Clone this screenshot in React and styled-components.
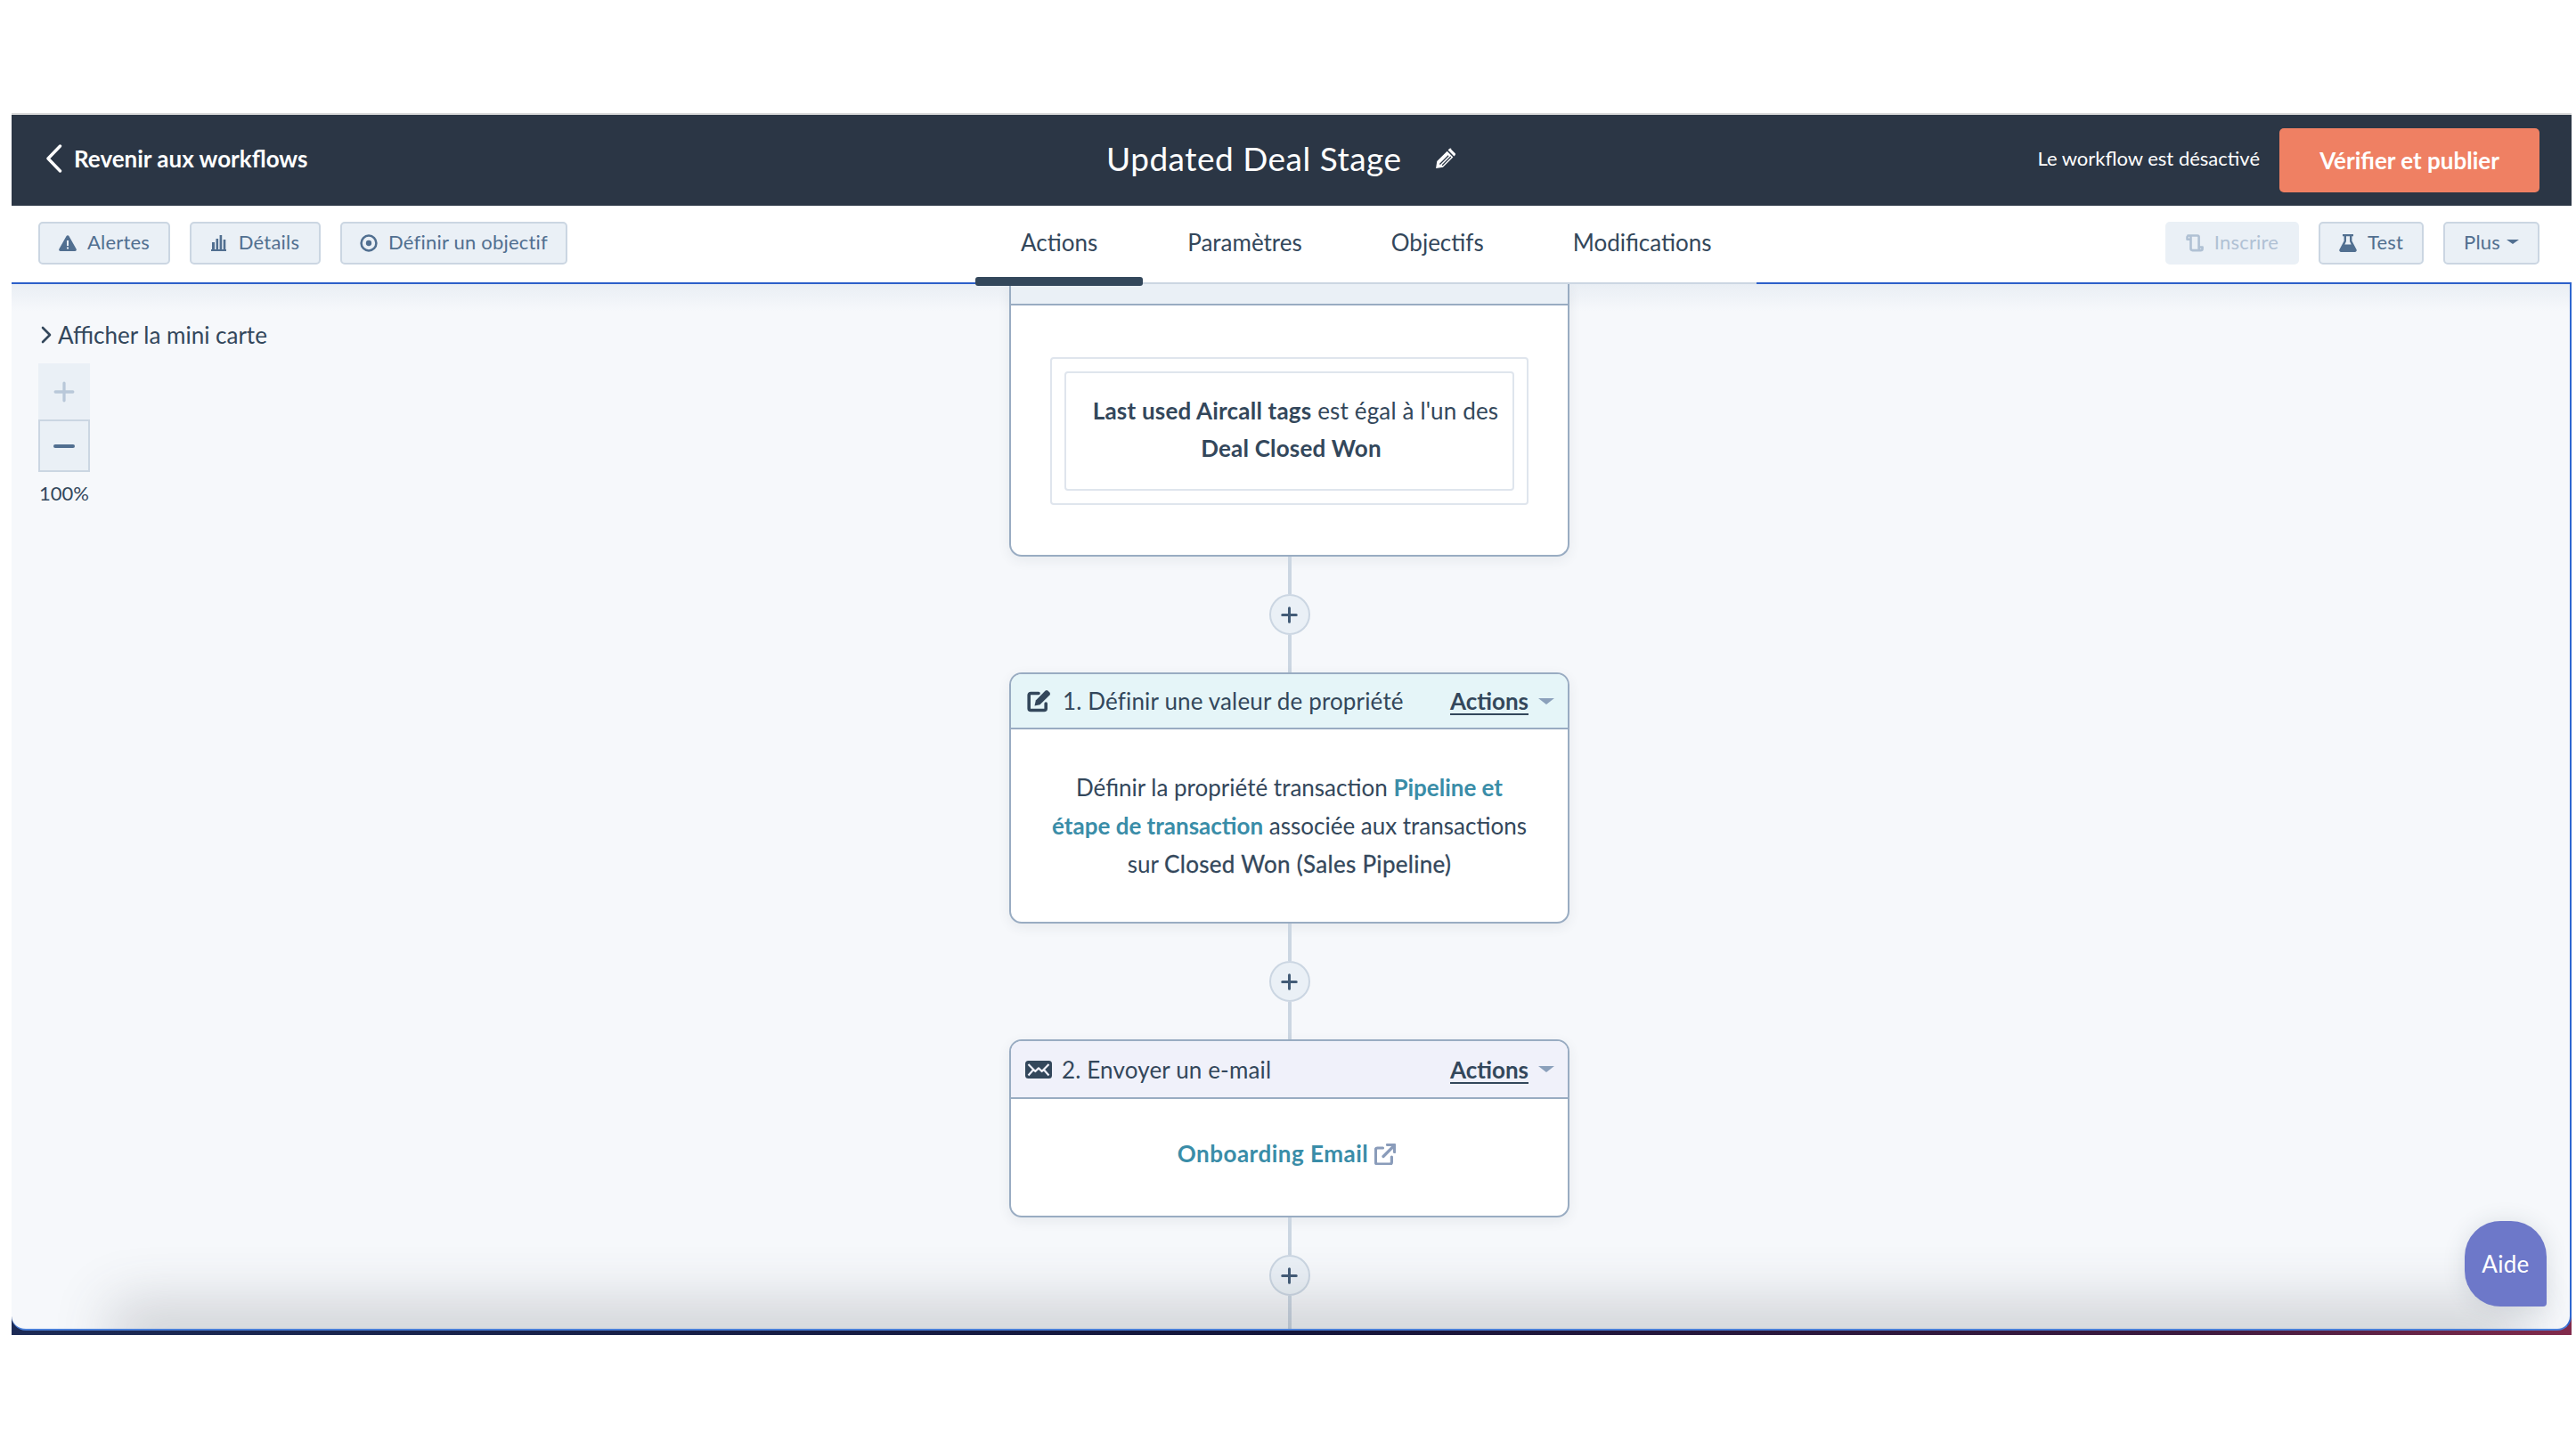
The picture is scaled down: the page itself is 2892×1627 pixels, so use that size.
import React from "react";
import styled, { createGlobalStyle } from "styled-components";

const Global = createGlobalStyle`
  html, body { margin: 0; padding: 0; background: #fff; }
  body { font-family: Lato, "Open Sans", "Liberation Sans", sans-serif; color: #33475b; }
  * { box-sizing: border-box; }
`;

const Page = styled.div`
  width: 2892px;
  height: 1627px;
  padding: 127px 5px 0 13px;
  overflow: hidden;
`;
const Window = styled.div`
  display: flex;
  flex-direction: column;
  width: 2874px;
`;
const TopBar = styled.header`
  display: grid;
  grid-template-columns: 1229px auto 1fr;
  align-items: center;
  height: 104px;
  padding-bottom: 4px;
  border-top: 2px solid #d9d9d9;
  background: #2b3645;
  color: #fff;
`;
const BackLink = styled.a`
  display: flex;
  align-items: center;
  gap: 13px;
  padding-left: 38px;
  font-size: 26px;
  font-weight: 700;
`;
const TitleGroup = styled.div`
  display: flex;
  align-items: center;
  gap: 37px;
`;
const Title = styled.h1`
  margin: 0;
  font-size: 37px;
  font-weight: 400;
  line-height: 44px;
  letter-spacing: 0.5px;
`;
const PencilSlot = styled.span`
  display: flex;
  margin-top: -3px;
`;
const PublishArea = styled.div`
  display: flex;
  align-items: center;
  justify-content: flex-end;
  gap: 22px;
  padding-right: 36px;
`;
const Status = styled.span`
  margin-top: -2px;
  font-size: 22px;
`;
const Publish = styled.button`
  width: 292px;
  height: 72px;
  margin-top: 4px;
  padding-bottom: 2px;
  border: 0;
  border-radius: 5px;
  background: #ef8063;
  color: #fff;
  font: 700 26px Lato, sans-serif;
`;
const Toolbar = styled.nav`
  display: flex;
  align-items: center;
  height: 88px;
  padding: 0 36px 2px 30px;
  background: #fff;
  border-bottom: 2px solid #2c5fc9;
`;
const ButtonGroup = styled.div`
  display: flex;
  align-items: center;
  gap: 22px;
  width: ${(p) => (p.$width ? `${p.$width}px` : "auto")};
  margin-left: ${(p) => (p.$push ? "auto" : 0)};
`;
const ToolButton = styled.button`
  display: flex;
  align-items: center;
  justify-content: center;
  gap: ${(p) => p.$gap || 12}px;
  width: ${(p) => p.$width}px;
  height: 48px;
  padding: 0 0 4px;
  border: 2px solid ${(p) => (p.$disabled ? "#eaf0f6" : "#cbd6e2")};
  border-radius: 5px;
  background: #eaf0f6;
  color: ${(p) => (p.$disabled ? "#b0c1d4" : "#516f90")};
  font: 400 22px Lato, sans-serif;
  letter-spacing: 0.2px;
  svg { margin-top: 3px; }
`;
const Tabs = styled.div`
  position: relative;
  z-index: 4;
  display: flex;
  align-self: flex-start;
  height: 88px;
  border-bottom: 2px solid #cbd6e2;
`;
const Tab = styled.a`
  position: relative;
  display: flex;
  align-items: center;
  height: 86px;
  padding: 0 ${(p) => (p.$active ? 51 : 50)}px 4px;
  font-size: 26px;
  color: #33475b;
  font-weight: 400;
  &::after {
    content: "";
    display: ${(p) => (p.$active ? "block" : "none")};
    position: absolute;
    left: 0;
    right: 0;
    bottom: -4px;
    height: 10px;
    border-radius: 3px;
    background: #33475b;
  }
`;
const CanvasFrame = styled.div`
  height: 1180px;
  padding-bottom: 5px;
  background: linear-gradient(90deg, #1c2a55 0%, #14153a 50%, #3c1a3f 85%, #822b4c 100%);
`;
const Canvas = styled.main`
  position: relative;
  display: flex;
  height: 1175px;
  padding-left: 30px;
  overflow: hidden;
  border-right: 2px solid #2f67cf;
  border-bottom: 2px solid #4a7fd8;
  border-bottom-right-radius: 16px;
  border-bottom-left-radius: 16px;
  background: linear-gradient(#e9eef4 0, #f6f8fb 30px);
`;
const Side = styled.aside`
  flex: none;
  width: 1090px;
  padding-top: 42px;
`;
const MiniMapToggle = styled.a`
  display: flex;
  align-items: center;
  gap: 7px;
  height: 30px;
  padding-left: 3px;
  font-size: 26px;
`;
const ZoomStack = styled.div`
  display: flex;
  flex-direction: column;
  width: 58px;
  margin-top: 17px;
`;
const ZoomButton = styled.button`
  display: flex;
  align-items: center;
  justify-content: center;
  width: 58px;
  height: ${(p) => (p.$active ? 59 : 63)}px;
  padding: 0;
  border: ${(p) => (p.$active ? "2px solid #cbd6e2" : "0")};
  background: #eaf0f6;
`;
const ZoomValue = styled.div`
  width: 58px;
  margin-top: 11px;
  text-align: center;
  font-size: 22px;
  line-height: 26px;
`;
const Flow = styled.section`
  flex: none;
  display: flex;
  flex-direction: column;
  width: 629px;
`;
const Card = styled.article`
  flex: none;
  overflow: hidden;
  background: #fff;
  border: 2px solid #99acc2;
  border-top-width: ${(p) => (p.$cut ? 0 : 2)}px;
  border-radius: ${(p) => (p.$cut ? "0 0 14px 14px" : "14px")};
  box-shadow: 0 4px 14px rgba(45, 62, 80, 0.08);
`;
const CardHead = styled.div`
  display: flex;
  align-items: center;
  height: ${(p) => p.$height}px;
  padding: 0 15px 0 ${(p) => p.$left || 18}px;
  border-bottom: 2px solid #99acc2;
  background: ${(p) => p.$bg};
  font-size: 26px;
`;
const HeadTitle = styled.span`
  margin-left: ${(p) => p.$gap}px;
  letter-spacing: 0.15px;
`;
const HeadActions = styled.a`
  display: flex;
  align-items: center;
  gap: 11px;
  margin-left: auto;
  font-weight: 700;
`;
const Underlined = styled.span`
  text-decoration: underline;
  text-underline-offset: 4px;
  text-decoration-thickness: 2px;
`;
const Caret = styled.i`
  display: block;
  width: 0;
  height: 0;
  border-left: ${(p) => p.$size}px solid transparent;
  border-right: ${(p) => p.$size}px solid transparent;
  border-top: ${(p) => p.$size * 0.85}px solid ${(p) => p.$color};
`;
const FilterBody = styled.div`
  padding: 58px 44px 56px;
`;
const FilterOuter = styled.div`
  padding: 14px;
  border: 2px solid #dfe5ed;
  border-radius: 4px;
`;
const FilterInner = styled.div`
  height: 134px;
  padding: 21px 0 0 4px;
  border: 2px solid #dfe5ed;
  border-radius: 4px;
  text-align: center;
  font-size: 26px;
  line-height: 42px;
  letter-spacing: 0.15px;
`;
const FirstLine = styled.div`
  padding-left: 10px;
  white-space: nowrap;
`;
const CardBody = styled.div`
  height: ${(p) => p.$height}px;
  padding: ${(p) => p.$top}px 20px 0;
  text-align: center;
  font-size: 26px;
  line-height: 43px;
`;
const TextLine = styled.div`
  white-space: nowrap;
`;
const Teal = styled.a`
  color: #3a8da8;
  font-weight: 700;
  letter-spacing: ${(p) => p.$spacing || 0}px;
`;
const Strong = styled.span`
  font-weight: 700;
  letter-spacing: 0.2px;
`;
const Medium = styled.span`
  font-weight: 400;
  letter-spacing: 0.3px;
  -webkit-text-stroke: 0.3px #33475b;
`;
const EmailLink = styled.div`
  display: flex;
  align-items: center;
  justify-content: center;
  gap: 7px;
  padding-right: 6px;
`;
const Connector = styled.div`
  flex: none;
  display: flex;
  flex-direction: column;
  align-items: center;
  height: 130px;
`;
const Line = styled.div`
  flex: ${(p) => (p.$grow ? 1 : "none")};
  width: 4px;
  height: 42px;
  background: #cbd6e2;
`;
const PlusButton = styled.button`
  flex: none;
  display: flex;
  align-items: center;
  justify-content: center;
  width: 46px;
  height: 46px;
  padding: 0;
  border: 2px solid #cbd6e2;
  border-radius: 50%;
  background: #eaf0f6;
`;
const HelpBubble = styled.button`
  position: absolute;
  right: 26px;
  bottom: 25px;
  z-index: 3;
  width: 92px;
  height: 96px;
  padding-bottom: 2px;
  border: 0;
  border-radius: 40px 40px 4px 40px;
  background: #6d78c9;
  color: #fff;
  font: 400 26px Lato, sans-serif;
  letter-spacing: 0.3px;
  box-shadow: 0 2px 26px rgba(45, 62, 80, 0.14);
`;
const BottomShade = styled.div`
  position: absolute;
  left: 140px;
  right: 80px;
  bottom: -8px;
  z-index: 2;
  height: 8px;
  box-shadow: 0 0 64px 28px rgba(70, 76, 84, 0.24);
  pointer-events: none;
`;

const Plus = ({ size = 19, color = "#425b76", width = 3.5 }) => (
  <svg width={size} height={size} viewBox="0 0 22 22" aria-hidden="true">
    <path d="M11 2v18M2 11h18" stroke={color} strokeWidth={width} strokeLinecap="round" />
  </svg>
);
const BackIcon = () => (
  <svg width="19" height="32" viewBox="0 0 19 32" aria-hidden="true">
    <path d="M16.5 2 3 16l13.5 14" fill="none" stroke="#fff" strokeWidth="3.4" strokeLinecap="round" strokeLinejoin="round" />
  </svg>
);
const PencilIcon = () => (
  <svg width="26" height="26" viewBox="0 0 24 24" aria-hidden="true">
    <path fill="#fff" d="M16.3 2.900 21 7.700a1.200 1.200 0 0 1 0 1.600l-1.200 1.200-6.300-6.300 1.200-1.300a1.600 1.600 0 0 1 2.600 0ZM12.600 5.200l6.200 6.300L8.300 21.900 1 23l1.100-7.300Z" />
    <path fill="none" stroke="#2b3645" strokeWidth="1.2" d="M5 18.900 14 10M7.500 20l9-9" />
  </svg>
);
const AlertIcon = () => (
  <svg width="20" height="18" viewBox="0 0 20 18" aria-hidden="true">
    <path fill="#516f90" d="M8.600 1 .4 15.600A1.600 1.600 0 0 0 1.800 18h16.400a1.600 1.600 0 0 0 1.400-2.400L11.400 1a1.600 1.600 0 0 0-2.800 0Z" />
    <path fill="#eaf0f6" d="M9 6h2v6H9zM9 13.400h2v2.200H9z" />
  </svg>
);
const BarsIcon = () => (
  <svg width="17" height="18" viewBox="0 0 17 18" aria-hidden="true">
    <path fill="#516f90" d="M0 16h17v2H0zM1 8h3v8H1zM5.500 4h2.600v12H5.500zM9.600 0h2.600v16H9.600zM13.700 5h2.600v11h-2.600z" />
  </svg>
);
const TargetIcon = () => (
  <svg width="20" height="20" viewBox="0 0 19 19" aria-hidden="true">
    <circle cx="9.500" cy="9.500" r="8" fill="none" stroke="#516f90" strokeWidth="2.400" />
    <circle cx="9.500" cy="9.500" r="3" fill="#516f90" />
  </svg>
);
const ScrollIcon = () => (
  <svg width="20" height="20" viewBox="0 0 20 20" aria-hidden="true">
    <path fill="none" stroke="#b0c1d4" strokeWidth="2.600" strokeLinejoin="round" d="M1.500 1.500h11.500a1.600 1.600 0 0 1 1.600 1.600v13a2 2 0 0 0 2 2H7.500a2 2 0 0 1-2-2V3.500a2 2 0 0 0-2-2 2 2 0 0 0-2 2v2.200h4M14.600 14.500h4v1.800a2 2 0 0 1-2 2" />
  </svg>
);
const FlaskIcon = () => (
  <svg width="20" height="20" viewBox="0 0 20 20" aria-hidden="true">
    <path fill="#516f90" d="M4 0h12v2.200h-1.600v5.200l5.200 9.800A2 2 0 0 1 17.800 20H2.200a2 2 0 0 1-1.800-2.800l5.200-9.800V2.200H4Zm4 2.200v5.900L6.300 11.400h7.400L12 8.100V2.200Z" />
  </svg>
);
const EditIcon = () => (
  <svg width="27" height="26" viewBox="0 0 27 26" aria-hidden="true">
    <path fill="none" stroke="#33475b" strokeWidth="3.600" strokeLinecap="round" strokeLinejoin="round" d="M13 4.500H4.200a2 2 0 0 0-2 2v15a2 2 0 0 0 2 2h15a2 2 0 0 0 2-2v-5.500" />
    <path fill="#33475b" d="m8.500 18.500 1.300-6L20.600 1.600a2 2 0 0 1 2.800 0l2 2a2 2 0 0 1 0 2.800L14.500 17.200Z" />
  </svg>
);
const MailIcon = () => (
  <svg width="30" height="20" viewBox="0 0 30 20" aria-hidden="true">
    <rect width="30" height="20" rx="3.500" fill="#33475b" />
    <path fill="none" stroke="#f0f1fa" strokeWidth="2.200" strokeLinejoin="round" d="m3.500 4 7.800 8L15 8.400l3.700 3.600 7.800-8M3.500 16.500l5.500-6.200M26.500 16.500 21 10.300" />
  </svg>
);
const ExternalIcon = () => (
  <svg width="24" height="24" viewBox="0 0 24 24" aria-hidden="true">
    <path fill="none" stroke="#8a9cba" strokeWidth="3.200" strokeLinejoin="round" strokeLinecap="round" d="M9.500 5H3.400A2 2 0 0 0 1.400 7v14a2 2 0 0 0 2 2h14a2 2 0 0 0 2-2v-6M10 14.500 22 2.500M14.500 1.500h8v8" />
  </svg>
);
const Chevron = () => (
  <svg width="12" height="20" viewBox="0 0 12 20" aria-hidden="true">
    <path d="m2 2 8 8-8 8" fill="none" stroke="#33475b" strokeWidth="2.600" strokeLinecap="round" strokeLinejoin="round" />
  </svg>
);

const PlusConnector = ({ grow }) => (
  <Connector>
    <Line />
    <PlusButton>
      <Plus />
    </PlusButton>
    <Line $grow={grow} />
  </Connector>
);

const StepHead = ({ bg, height, left, gap, icon, title }) => (
  <CardHead $bg={bg} $height={height} $left={left}>
    {icon}
    <HeadTitle $gap={gap}>{title}</HeadTitle>
    <HeadActions>
      <Underlined>Actions</Underlined>
      <Caret $size={9} $color="#8ba0bb" />
    </HeadActions>
  </CardHead>
);

export default function App() {
  return (
    <Page>
      <Global />
      <Window>
        <TopBar>
          <BackLink>
            <BackIcon />
            Revenir aux workflows
          </BackLink>
          <TitleGroup>
            <Title>Updated Deal Stage</Title>
            <PencilSlot><PencilIcon /></PencilSlot>
          </TitleGroup>
          <PublishArea>
            <Status>Le workflow est désactivé</Status>
            <Publish>Vérifier et publier</Publish>
          </PublishArea>
        </TopBar>
        <Toolbar>
          <ButtonGroup $width={1052}>
            <ToolButton $width={148}><AlertIcon />Alertes</ToolButton>
            <ToolButton $width={147} $gap={14}><BarsIcon />Détails</ToolButton>
            <ToolButton $width={255}><TargetIcon />Définir un objectif</ToolButton>
          </ButtonGroup>
          <Tabs>
            <Tab $active>Actions</Tab>
            <Tab>Paramètres</Tab>
            <Tab>Objectifs</Tab>
            <Tab>Modifications</Tab>
          </Tabs>
          <ButtonGroup $push>
            <ToolButton $width={150} $disabled><ScrollIcon />Inscrire</ToolButton>
            <ToolButton $width={118}><FlaskIcon />Test</ToolButton>
            <ToolButton $width={108} $gap={7}>Plus<Caret $size={7} $color="#516f90" /></ToolButton>
          </ButtonGroup>
        </Toolbar>
        <CanvasFrame>
          <Canvas>
            <Side>
              <MiniMapToggle><Chevron />Afficher la mini carte</MiniMapToggle>
              <ZoomStack>
                <ZoomButton><Plus size={24} color="#b9c8d9" width={3} /></ZoomButton>
                <ZoomButton $active>
                  <svg width="24" height="4" viewBox="0 0 24 4" aria-hidden="true"><rect width="24" height="4" rx="2" fill="#516f90" /></svg>
                </ZoomButton>
              </ZoomStack>
              <ZoomValue>100%</ZoomValue>
            </Side>
            <Flow>
              <Card $cut>
                <CardHead $bg="#eaf0f6" $height={24} />
                <FilterBody>
                  <FilterOuter>
                    <FilterInner>
                      <FirstLine><Strong>Last used Aircall tags</Strong> est égal à l'un des</FirstLine>
                      <Strong>Deal Closed Won</Strong>
                    </FilterInner>
                  </FilterOuter>
                </FilterBody>
              </Card>
              <PlusConnector />
              <Card>
                <StepHead bg="#e5f5f8" height={62} gap={13} icon={<EditIcon />} title="1. Définir une valeur de propriété" />
                <CardBody $height={216} $top={44}>
                  <TextLine>Définir la propriété transaction <Teal>Pipeline et</Teal></TextLine>
                  <TextLine><Teal>étape de transaction</Teal> associée aux transactions</TextLine>
                  <TextLine>sur <Medium>Closed Won (Sales Pipeline)</Medium></TextLine>
                </CardBody>
              </Card>
              <PlusConnector />
              <Card>
                <StepHead bg="#f0f1fa" height={65} left={16} gap={11} icon={<MailIcon />} title="2. Envoyer un e-mail" />
                <CardBody $height={131} $top={40}>
                  <EmailLink><Teal $spacing={0.5}>Onboarding Email</Teal><ExternalIcon /></EmailLink>
                </CardBody>
              </Card>
              <PlusConnector grow />
            </Flow>
            <BottomShade />
            <HelpBubble>Aide</HelpBubble>
          </Canvas>
        </CanvasFrame>
      </Window>
    </Page>
  );
}
